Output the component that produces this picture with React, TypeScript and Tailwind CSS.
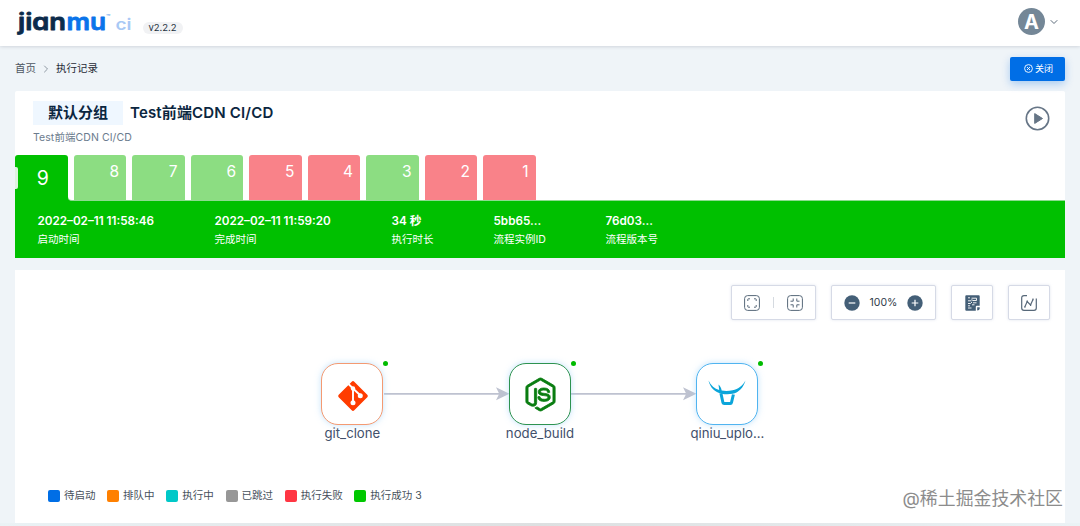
import { ChevronDown, ChevronRight } from "lucide-react";
import { SiNodedotjs } from "react-icons/si";
import { clsx } from "clsx";
import { ReactNode } from "react";

type BuildStatus = "success" | "failed";

type Build = {
  no: number;
  status: BuildStatus;
};

const builds: Build[] = [
  { no: 8, status: "success" },
  { no: 7, status: "success" },
  { no: 6, status: "success" },
  { no: 5, status: "failed" },
  { no: 4, status: "failed" },
  { no: 3, status: "success" },
  { no: 2, status: "failed" },
  { no: 1, status: "failed" },
];

const details = [
  { value: "2022–02–11 11:58:46", label: "启动时间", className: "w-[177px]" },
  { value: "2022–02–11 11:59:20", label: "完成时间", className: "w-[177px]" },
  { value: "34 秒", label: "执行时长", className: "w-[102px]" },
  { value: "5bb65...", label: "流程实例ID", className: "w-[112px]" },
  { value: "76d03...", label: "流程版本号", className: "w-[112px]" },
];

const legend = [
  { label: "待启动", color: "bg-[#006ee6]" },
  { label: "排队中", color: "bg-[#ff8000]" },
  { label: "执行中", color: "bg-[#00c8c8]" },
  { label: "已跳过", color: "bg-[#979797]" },
  { label: "执行失败", color: "bg-[#ff3643]" },
  { label: "执行成功 3", color: "bg-[#00c800]" },
];

function Logo() {
  return (
    <svg
      width="118"
      height="40"
      viewBox="0 0 118 40"
      className="block overflow-visible [font-feature-settings:'cv11']"
      fontFamily="Inter, sans-serif"
      fontWeight="600"
      fontSize="23"
      strokeWidth="0.8"
      strokeLinejoin="round"
    >
      <text x="3" y="26.500" textLength="48" lengthAdjust="spacingAndGlyphs" fill="#0b2b4b" stroke="#0b2b4b">
        jian
      </text>
      <text x="51.500" y="26.500" textLength="39.500" lengthAdjust="spacingAndGlyphs" fill="#0a74ea" stroke="#0a74ea">
        mu
      </text>
      <text
        x="100.500"
        y="26.500"
        textLength="16"
        fontSize="15.500"
        lengthAdjust="spacingAndGlyphs"
        fill="#a9c9f5"
        stroke="none"
      >
        ci
      </text>
      <text x="91" y="17" fontSize="7" fontWeight="500" fill="#5f9fe8" stroke="none">
        ™
      </text>
    </svg>
  );
}

function Header() {
  return (
    <header className="relative flex h-[46px] items-center bg-white pl-[15px] pr-[20px] shadow-[0_0_4px_rgba(0,20,40,0.2)]">
      <Logo />
      <span className="ml-[10px] mt-[10px] flex h-3 w-[40px] items-center justify-center rounded-full bg-[#f1f2f4] pr-px text-[9.5px] text-[#26323f]">
        v2.2.2
      </span>
      <div className="ml-auto flex items-center gap-[3px] pb-[3px]">
        <div className="flex size-[27px] items-center justify-center rounded-full bg-[#748797] text-[20px] font-bold leading-none text-white">
          A
        </div>
        <ChevronDown size={12} strokeWidth={2} className="text-[#5c6b7a]" />
      </div>
    </header>
  );
}

function Breadcrumb() {
  return (
    <div className="flex h-[45px] items-center justify-between px-[15px] text-[10.5px]">
      <div className="flex items-center">
        <span className="text-[#4d5661]">首页</span>
        <ChevronRight size={12} strokeWidth={1.7} className="mx-[4px] text-[#7d8894]" />
        <span className="text-[#1f2a36]">执行记录</span>
      </div>
      <button className="flex h-6 w-[55px] items-center justify-center gap-[2px] rounded-[2px] bg-[#006ee6] pl-[2px] text-[9px] text-white shadow-[0_3px_8px_rgba(0,110,230,0.3)]">
        <svg width="9" height="9" viewBox="0 0 9 9" fill="none" stroke="currentColor" strokeWidth="0.9">
          <circle cx="4.5" cy="4.5" r="3.9" />
          <path d="M3 3l3 3M6 3l-3 3" />
        </svg>
        关闭
      </button>
    </div>
  );
}

function Summary() {
  return (
    <section className="mx-[15px] h-[167px] rounded-t-[2px] bg-white">
      <div className="flex h-16 justify-between pl-[18px] pr-[15px] pt-[10px]">
        <div>
          <div className="flex h-6 items-center text-[15px] font-bold text-[#0b2640]">
            <span className="mr-[7px] bg-[#eff7ff] px-[15px] leading-6">默认分组</span>
            <span className="font-semibold tracking-[0.16px]">Test前端CDN CI/CD</span>
          </div>
          <div className="mt-[5px] text-[10.5px] leading-4 tracking-[0.08px] text-[#6b7b8d]">Test前端CDN CI/CD</div>
        </div>
        <svg width="25" height="25" viewBox="0 0 25 25" className="mt-[5px]">
          <circle cx="12.5" cy="12.5" r="11.2" fill="none" stroke="#667586" strokeWidth="1.6" />
          <path d="M9.7 7.6v9.8l7.8-4.9z" fill="#667586" stroke="#667586" strokeLinejoin="round" />
        </svg>
      </div>

      <div className="flex h-[46px] text-white">
        <div className="relative flex w-[52.5px] items-center justify-center rounded-t-[3px] bg-[#00c000] pl-[3px] pt-[2px] text-[19.5px]">
          <span className="absolute left-0 top-3 h-[22px] w-[3px] rounded-r-[2px] bg-[#ddf3df]" />
          9
        </div>
        <div className="w-[6px] bg-[#00c000]">
          <div className="h-full rounded-bl-[4px] border-b border-[#8cdb8f] bg-white" />
        </div>
        <div className="flex flex-1 gap-[6px] border-b border-[#8cdb8f] bg-white">
          {builds.map((build) => (
            <div
              key={build.no}
              className={clsx(
                "w-[52.5px] rounded-t-[3px] pr-[7px] pt-[7px] text-right text-[15.5px] leading-5",
                build.status === "success" ? "bg-[#8cdd82]" : "bg-[#f98289]",
              )}
            >
              {build.no}
            </div>
          ))}
        </div>
      </div>

      <div className="flex h-[57px] bg-[#00c000] pl-[22.5px] pt-[12px] text-white">
        {details.map((item) => (
          <div key={item.label} className={item.className}>
            <div className="text-[11.7px] font-semibold leading-4">{item.value}</div>
            <div className="mt-[3px] text-[10.5px] leading-4">{item.label}</div>
          </div>
        ))}
      </div>
    </section>
  );
}

function ToolBox({ className, children }: { className: string; children: ReactNode }) {
  return (
    <div
      className={clsx(
        "flex h-[35px] items-center justify-center rounded-[2px] border border-[#d6dae6] bg-white text-[#576879] shadow-[0_0_3px_rgba(180,190,215,0.4)]",
        className,
      )}
    >
      {children}
    </div>
  );
}

function Toolbar() {
  return (
    <div className="flex justify-end gap-[15px] pr-[15px] pt-[15px]">
      <ToolBox className="w-[85px] gap-[13px]">
        <svg width="16" height="16" viewBox="0 0 16 16" fill="none" stroke="currentColor">
          <rect x="0.6" y="0.6" width="14.8" height="14.8" rx="3" />
          <path d="M3.8 6V4.3q0-.5.5-.5H6M10 3.8h1.7q.5 0 .5.5V6M12.200 10v1.700q0 .5-.5.5H10M6 12.200H4.300q-.5 0-.5-.5V10" />
        </svg>
        <span className="h-[11px] w-px bg-[#d5dae0]" />
        <svg width="16" height="16" viewBox="0 0 16 16" fill="none" stroke="currentColor">
          <rect x="0.6" y="0.6" width="14.8" height="14.8" rx="3" />
          <path d="M6.200 3.500v2.700H3.500M9.800 3.500v2.700h2.700M12.500 9.800H9.800v2.700M6.200 12.500V9.800H3.500" />
        </svg>
      </ToolBox>
      <ToolBox className="w-[105px] gap-[9.5px]">
        <svg width="16" height="16" viewBox="0 0 16 16">
          <circle cx="8" cy="8" r="7.700" fill="#445f77" />
          <path d="M4.700 8h6.600" stroke="#fff" strokeWidth="1.200" />
        </svg>
        <span className="text-[10.5px] text-[#2f3c49]">100%</span>
        <svg width="16" height="16" viewBox="0 0 16 16">
          <circle cx="8" cy="8" r="7.700" fill="#445f77" />
          <path d="M4.700 8h6.600M8 4.700v6.600" stroke="#fff" strokeWidth="1.200" />
        </svg>
      </ToolBox>
      <ToolBox className="w-[42px]">
        <svg width="15" height="16" viewBox="0 0 15 16">
          <path d="M1.300.300h12.400q1 0 1 1V10.800h-2.900q-1 0-1 1v3.900H1.300q-1 0-1-1V1.300q0-1 1-1z" fill="#445f77" />
          <path
            d="M3 2.800h2M6.500 3.200h5M11.500 3.200v2.300H8L6.500 4.600M3 5.800h3.500M8 7.800h3.500M3 8.500h2.500l1.500-1.500M7 9.800h2.500M3 10.800h2M3 13h3.500"
            stroke="#fff"
            strokeWidth="0.9"
            fill="none"
          />
          <path d="M12.200 15.600v-3.400h2.500v1.400q0 2-2.500 2z" fill="#445f77" />
        </svg>
      </ToolBox>
      <ToolBox className="w-[42px]">
        <svg width="16" height="16" viewBox="0 0 16 16" fill="none" stroke="currentColor" strokeWidth="1.200">
          <path d="M6 .7H3Q.7.7.7 3v10q0 2.300 2.300 2.300h10q2.300 0 2.300-2.300V3.500" />
          <path d="M4 11.500l2.200-5 3.300 3.500L12 4.500" />
          <path d="M3.300 11.800h1.200M9 10.200h1.200M11.400 4.300h1.200M5.600 6.300h1.200" strokeWidth="1.800" />
        </svg>
      </ToolBox>
    </div>
  );
}

function GitLogo() {
  return (
    <svg width="32" height="32" viewBox="0 0 32 32" className="relative left-[0.5px] top-[1.5px]">
      <rect x="5" y="5" width="22" height="22" rx="1.800" transform="rotate(45 16 16)" fill="#ff3c00" />
      <g stroke="#fff" strokeWidth="1.900" fill="none">
        <path d="M10 2.500l6 6M16 8v14.500M16 8.500l7.500 7" />
      </g>
      <g fill="#fff">
        <circle cx="16" cy="8.500" r="2.200" />
        <circle cx="16" cy="22.700" r="2.500" />
        <circle cx="23.300" cy="15.800" r="2.500" />
      </g>
    </svg>
  );
}

function QiniuLogo() {
  return (
    <svg width="38" height="26" viewBox="0 0 38 26" fill="#0ba5da" className="relative top-[-1px]">
      <path d="M.5.500C3 5.500 6.500 8.700 11.200 10L10.500 4.500C12.300 6 13.300 8.200 13.700 10.500Q19 11.500 24.500 10.200C30.500 9 34.800 5.500 37.500.500C35.500 7.500 31 12.500 24.500 13.800Q19 14.700 13.500 13.700C7 12.500 2 7.500.500.500z" />
      <path
        d="M12.900 13.200l2 9.300q.300 1 1.300 1h6.100q1 0 1.200-1l1.900-8"
        fill="none"
        stroke="#0ba5da"
        strokeWidth="3"
      />
    </svg>
  );
}

type FlowNodeProps = {
  name: string;
  className: string;
  borderClassName: string;
  children: ReactNode;
};

function FlowNode({ name, className, borderClassName, children }: FlowNodeProps) {
  return (
    <div className={clsx("absolute top-[93px] w-[100px] text-center", className)}>
      <div
        className={clsx(
          "relative mx-auto flex size-[62px] items-center justify-center rounded-[17px] border bg-white shadow-[0_0_6px_rgba(170,215,250,0.7)]",
          borderClassName,
        )}
      >
        {children}
        <span className="absolute -right-[5.5px] -top-[3px] size-[5px] rounded-full bg-[#0b0]" />
      </div>
      <div className="-mt-px text-[13.200px] leading-[18px] text-[#42506b]">{name}</div>
    </div>
  );
}

function Arrow({ className }: { className: string }) {
  return (
    <svg width="126" height="14" viewBox="0 0 126 14" className={clsx("absolute top-[117px]", className)}>
      <path d="M0 6.800h118" stroke="#bec2d0" strokeWidth="1.800" />
      <path d="M125.500 6.800L112 .300l3.200 6.500-3.200 6.500z" fill="#bec2d0" />
    </svg>
  );
}

function Workflow() {
  return (
    <section className="relative mx-[15px] mt-[12px] h-[253px] bg-white">
      <Toolbar />
      <Arrow className="left-[369px]" />
      <Arrow className="left-[556px]" />
      <FlowNode name="git_clone" className="left-[287.400px]" borderClassName="border-[#f49a72]">
        <GitLogo />
      </FlowNode>
      <FlowNode name="node_build" className="left-[475px]" borderClassName="border-[#2e9350]">
        <SiNodedotjs size={33} color="#0a7d11" stroke="#0a7d11" strokeWidth={0.6} className="overflow-visible" />
      </FlowNode>
      <FlowNode name="qiniu_uplo..." className="left-[662.400px]" borderClassName="border-[#50b4f0]">
        <QiniuLogo />
      </FlowNode>

      <div className="absolute left-[33px] top-[218px] flex gap-[11.800px] text-[10.5px] leading-4 text-[#47515c]">
        {legend.map((item) => (
          <div key={item.label} className="flex items-center gap-[3.900px]">
            <span className={clsx("size-3 rounded-[2px]", item.color)} />
            {item.label}
          </div>
        ))}
      </div>
    </section>
  );
}

export default function App() {
  return (
    <div className="relative h-[526px] w-[1080px] overflow-hidden bg-[#eff4f8] font-[Inter,'Noto_Sans_CJK_SC',sans-serif]">
      <Header />
      <Breadcrumb />
      <Summary />
      <Workflow />
      <div className="h-[3px] bg-linear-to-r from-[#eaf2f5] via-[#dde0e1] to-[#eaf2f5]" />
      <div className="absolute bottom-[17px] right-[17px] text-[17.900px] leading-5 text-[#8c8c8c]">
        @稀土掘金技术社区
      </div>
    </div>
  );
}
